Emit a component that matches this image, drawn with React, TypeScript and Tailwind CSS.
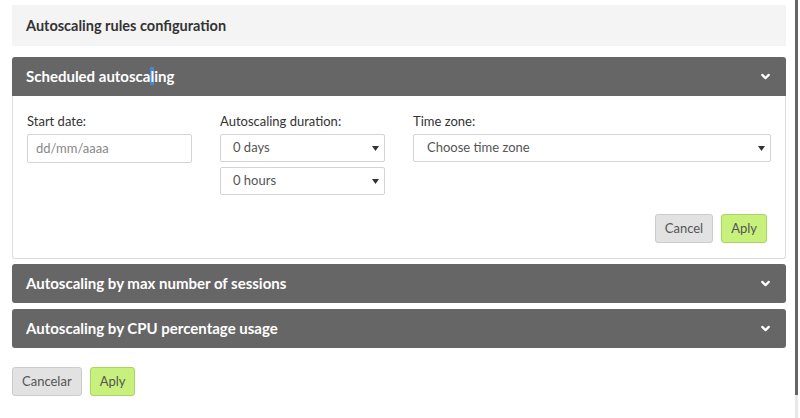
import { ChevronDown } from "lucide-react"

const Caret = () => (
    <svg width="7" height="5" viewBox="0 0 7 5" className="shrink-0"><path d="M0 0h7L3.5 5z" fill="#333" /></svg>
)

const Select = ({ label, className }: { label: string; className: string }) => (
    <div className={`flex items-center justify-between h-[28px] border border-[#d4d4d4] rounded-[2px] bg-white pl-[12px] pr-[5px] text-[13px] text-[#555] ${className}`}>
        <span>{label}</span>
        <Caret />
    </div>
)

const PanelHeader = ({ title, open }: { title: React.ReactNode; open?: boolean }) => (
    <div className={`flex items-center justify-between h-[39px] bg-[#666666] pl-[14px] pr-[14px] text-white text-[15px] font-bold ${open ? "rounded-t-[3px]" : "rounded-[3px]"}`}>
        <span>{title}</span>
        <ChevronDown className="w-[13px] h-[13px]" strokeWidth={4} />
    </div>
)

export default function App() {
    return (
        <div className="flex w-[800px] h-[418px] bg-white overflow-hidden" style={{ fontFamily: "Lato, 'Open Sans', sans-serif" }}>
            <div className="flex-1 pl-[12px] pr-[8px] pt-[5px]">
                <div className="h-[41px] bg-[#f4f4f4] flex items-center pl-[14px] text-[14.5px] font-bold text-[#333]">
                    Autoscaling rules configuration
                </div>

                <div className="mt-[11px]">
                    <PanelHeader open title={<>Scheduled autosca<span className="bg-[#4a86d8]">l</span>ing</>} />
                    <div className="border border-t-0 border-[#dddddd] rounded-b-[3px] pl-[14px] pr-[14px] pt-[16px] pb-[15px]">
                        <div className="flex gap-[28px]">
                            <div className="w-[165px]">
                                <div className="text-[13px] text-[#333] h-[22px]">Start date:</div>
                                <div className="h-[29px] border border-[#d4d4d4] rounded-[2px] flex items-center pl-[8px] text-[13px] text-[#888]">dd/mm/aaaa</div>
                            </div>
                            <div className="w-[165px]">
                                <div className="text-[13px] text-[#333] h-[22px]">Autoscaling duration:</div>
                                <Select label="0 days" className="" />
                                <Select label="0 hours" className="mt-[5px]" />
                            </div>
                            <div className="flex-1">
                                <div className="text-[13px] text-[#333] h-[22px]">Time zone:</div>
                                <Select label="Choose time zone" className="pl-[13px]" />
                            </div>
                        </div>
                        <div className="flex justify-end gap-[8px] mt-[19px] pr-[4px]">
                            <button className="h-[29px] px-[9px] bg-[#e2e2e2] border border-[#cccccc] rounded-[3px] text-[13px] text-[#555]">Cancel</button>
                            <button className="h-[29px] px-[9px] bg-[#c8f07c] border border-[#a8d65e] rounded-[3px] text-[13px] text-[#555]">Aply</button>
                        </div>
                    </div>
                </div>

                <div className="mt-[5px]">
                    <PanelHeader title="Autoscaling by max number of sessions" />
                </div>
                <div className="mt-[6px]">
                    <PanelHeader title="Autoscaling by CPU percentage usage" />
                </div>

                <div className="flex gap-[8px] mt-[19px]">
                    <button className="h-[29px] px-[9px] bg-[#e2e2e2] border border-[#cccccc] rounded-[3px] text-[13px] text-[#555]">Cancelar</button>
                    <button className="h-[29px] px-[9px] bg-[#c8f07c] border border-[#a8d65e] rounded-[3px] text-[13px] text-[#555]">Aply</button>
                </div>
            </div>
            <div className="w-[6px] flex flex-col items-start pl-[1px]">
                <div className="w-[3px] h-[395px] bg-[#666666]" />
                <div className="w-[3px] flex-1 bg-[#e8e8e8]" />
            </div>
        </div>
    )
}
